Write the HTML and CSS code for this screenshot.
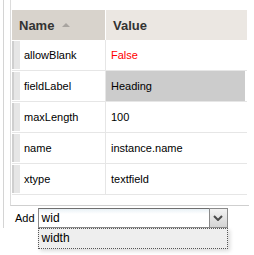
FILE: index.html
```html
<!DOCTYPE html>
<html lang="en">
<head>
  <meta charset="UTF-8" />
  <title>Property Grid</title>
  <link rel="stylesheet" href="styles.css">
</head>
<body>

  <!-- Panneau contenant la grille de propriétés et la barre d'ajout -->
  <div class="panel">
    <div class="grid-wrap">
      <div class="grid">
        <div class="grid-head">
          <div class="hcell hcell-name">Name <span class="sort-arrow"></span></div>
          <div class="hcell hcell-value">Value</div>
        </div>

        <div class="grid-row">
          <div class="handle"></div>
          <div class="cell cell-name">allowBlank</div>
          <div class="cell cell-value red">False</div>
        </div>
        <div class="grid-row">
          <div class="handle"></div>
          <div class="cell cell-name">fieldLabel</div>
          <div class="cell cell-value editing">Heading</div>
        </div>
        <div class="grid-row">
          <div class="handle"></div>
          <div class="cell cell-name">maxLength</div>
          <div class="cell cell-value">100</div>
        </div>
        <div class="grid-row">
          <div class="handle"></div>
          <div class="cell cell-name">name</div>
          <div class="cell cell-value">instance.name</div>
        </div>
        <div class="grid-row">
          <div class="handle"></div>
          <div class="cell cell-name">xtype</div>
          <div class="cell cell-value">textfield</div>
        </div>
      </div>
    </div>

    <!-- Barre d'ajout avec combo -->
    <div class="toolbar">
      <span class="add-label">Add</span>
      <div class="combo">
        <div class="combo-box">
          <div class="combo-field">wid</div>
          <div class="combo-trigger">
            <svg width="10" height="6" viewBox="0 0 10 6">
              <path d="M1 1 L5 5 L9 1" fill="none" stroke="#4a4a4a" stroke-width="2"/>
            </svg>
          </div>
        </div>
        <div class="combo-list">width</div>
      </div>
    </div>
  </div>

</body>
</html>
```

FILE: styles.css
```css
body {
  margin: 0;
  min-height: 255px;
  background: #fff;
  font-family: 'Liberation Sans', Arial, sans-serif;
  color: #000;
}

/* Panneau extérieur */
.panel {
  margin-left: 3px;
  border-left: 1px solid #d4d4d4;
  height: 228px;
  padding-left: 6px;
  width: 238px;
}

.grid-wrap {
  border-left: 1px solid #dcdcdc;
  border-bottom: 1px solid #cfcfcf;
  padding: 10px 0 10px 1px;
  width: 237px;
}

.grid {
  width: 235px;
}

/* En-tête de la grille */
.grid-head {
  display: flex;
  height: 30px;
}

.hcell {
  display: flex;
  align-items: center;
  font-size: 13px;
  font-weight: bold;
  color: #333;
  padding-left: 7px;
  box-sizing: border-box;
}

.hcell-name {
  width: 94px;
  background: #d8d3cc;
  border-right: 1px solid #fff;
}

.hcell-value {
  flex: 1;
  background: #ebe7e2;
}

.sort-arrow {
  width: 0;
  height: 0;
  margin-left: 8px;
  border-left: 4px solid transparent;
  border-right: 4px solid transparent;
  border-bottom: 4px solid #a8a49f;
}

/* Lignes */
.grid-row {
  display: flex;
  height: 30px;
  border-bottom: 1px solid #e6e6e6;
}

.handle {
  width: 8px;
  background: linear-gradient(to right, #cfcfcf 0, #cfcfcf 2px, #e6e6e6 2px);
  margin: 1px 0;
}

.cell {
  display: flex;
  align-items: center;
  font-size: 11px;
  box-sizing: border-box;
}

.cell-name {
  width: 86px;
  padding-left: 4px;
  border-right: 1px solid #e6e6e6;
}

.cell-value {
  flex: 1;
  padding-left: 5px;
  margin-right: 2px;
}

.red {
  color: #f00;
}

.editing {
  background: #cccccc;
}

/* Barre d'ajout */
.toolbar {
  display: flex;
  align-items: flex-start;
  padding: 2px 0 0 5px;
}

.add-label {
  font-size: 11px;
  line-height: 20px;
  margin-right: 3px;
}

.combo {
  width: 190px;
}

.combo-box {
  display: flex;
  height: 20px;
}

.combo-field {
  flex: 1;
  border: 1px solid #8a8a8a;
  border-top-color: #6f6f6f;
  border-right: none;
  background: linear-gradient(#e9f1f6, #fff 5px);
  font-size: 12px;
  line-height: 18px;
  padding-left: 3px;
}

.combo-trigger {
  width: 17px;
  border: 1px solid #8a8a8a;
  background: linear-gradient(#f2f2f2, #d4d4d4);
  display: flex;
  align-items: center;
  justify-content: center;
}

/* Liste déroulante sous le champ */
.combo-list {
  height: 21px;
  box-sizing: border-box;
  border: 1px dotted #555;
  background: #eeeeee;
  font-size: 12px;
  line-height: 19px;
  padding-left: 3px;
  box-shadow: 2px 2px 4px rgba(0,0,0,0.15);
}
```
